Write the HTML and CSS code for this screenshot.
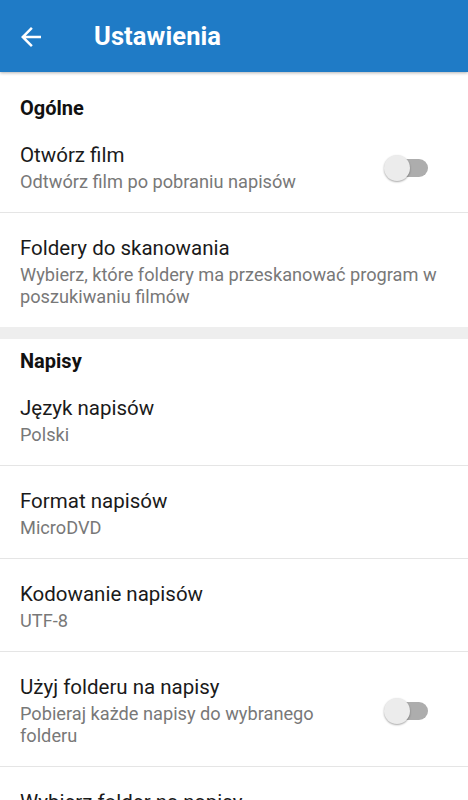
FILE: index.html
```html
<!DOCTYPE html>
<html lang="pl">
<head>
<meta charset="utf-8">
<link rel="stylesheet" href="styles.css">
</head>
<body>
<header class="appbar">
  <svg class="back" width="30" height="30" viewBox="0 0 24 24"><path d="M20 11H7.83l5.59-5.59L12 4l-8 8 8 8 1.41-1.41L7.83 13H20v-2z" fill="#fff"/></svg>
  <h1 class="title">Ustawienia</h1>
</header>
<main class="list">
  <section class="group first">
    <div class="cat">Ogólne</div>
    <div class="item">
      <div class="text">
        <div class="t">Otwórz film</div>
        <div class="s">Odtwórz film po pobraniu napisów</div>
      </div>
      <span class="switch"><span class="track"></span><span class="thumb"></span></span>
    </div>
    <div class="item">
      <div class="text">
        <div class="t">Foldery do skanowania</div>
        <div class="s">Wybierz, które foldery ma przeskanować program w poszukiwaniu filmów</div>
      </div>
    </div>
  </section>
  <div class="band"></div>
  <section class="group">
    <div class="cat">Napisy</div>
    <div class="item">
      <div class="text">
        <div class="t">Język napisów</div>
        <div class="s">Polski</div>
      </div>
    </div>
    <div class="item">
      <div class="text">
        <div class="t">Format napisów</div>
        <div class="s">MicroDVD</div>
      </div>
    </div>
    <div class="item">
      <div class="text">
        <div class="t">Kodowanie napisów</div>
        <div class="s">UTF-8</div>
      </div>
    </div>
    <div class="item">
      <div class="text narrow">
        <div class="t">Użyj folderu na napisy</div>
        <div class="s">Pobieraj każde napisy do wybranego folderu</div>
      </div>
      <span class="switch"><span class="track"></span><span class="thumb"></span></span>
    </div>
    <div class="item">
      <div class="text">
        <div class="t">Wybierz folder na napisy</div>
        <div class="s">&nbsp;</div>
      </div>
    </div>
  </section>
</main>
</body>
</html>
```
FILE: styles.css
```css
html, body { margin: 0; padding: 0; }
body {
  width: 468px;
  height: 800px;
  overflow: hidden;
  background: #fff;
  font-family: Roboto, "Noto Sans", sans-serif;
  color: #1a1a1a;
}
.appbar {
  position: relative;
  z-index: 2;
  height: 72px;
  background: #1f7bc6;
  display: flex;
  align-items: center;
  box-shadow: 0 1px 3px rgba(0,0,0,0.3);
}
.back { margin-left: 16px; width: 30px; height: 30px; margin-top: 2px; }
.title {
  margin: 0 0 0 48px;
  color: #fff;
  font-size: 25.5px;
  font-weight: 700;
  letter-spacing: 0.1px;
}
.list { display: flex; flex-direction: column; }
.group.first { padding-top: 14px; }
.cat {
  padding: 12px 20px 2px;
  line-height: 20px;
  font-size: 20px;
  font-weight: 700;
  color: #111;
}
.item {
  display: flex;
  align-items: center;
  padding: 22px 20px 19px;
  border-top: 1px solid #e5e5e5;
}
.cat + .item { border-top: none; }
.text { flex: 1; min-width: 0; }
.text.narrow { flex: 0 0 330px; margin-right: auto; }
.t { font-size: 20.5px; line-height: 26px; color: #1a1a1a; }
.s { margin-top: 3px; font-size: 18.2px; line-height: 22px; color: #787878; }
.band { height: 12px; background: #eeeeee; }
.switch {
  position: relative;
  flex: 0 0 44px;
  width: 44px;
  height: 26px;
  margin-right: 20px;
  margin-left: 8px;
}
.track {
  position: absolute;
  left: 6px; top: 4px;
  width: 38px; height: 18px;
  border-radius: 9px;
  background: #adadad;
}
.thumb {
  position: absolute;
  left: 0; top: 0;
  width: 26px; height: 26px;
  border-radius: 50%;
  background: #ececec;
  box-shadow: 0 1px 2px rgba(0,0,0,0.35);
}
```
